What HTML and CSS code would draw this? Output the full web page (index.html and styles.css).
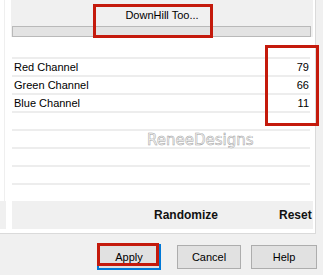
FILE: index.html
```html
<!DOCTYPE html>
<html>
<head>
    <meta charset="utf-8">
    <link rel="stylesheet" href="styles.css">
</head>
<body>
    <div class="dialog">
        <div class="panel">
            <div class="head">
                <div class="title">DownHill Too...</div>
                <div class="bar"></div>
            </div>
            <div class="list">
                <div class="row"><span>Red Channel</span><span>79</span></div>
                <div class="row"><span>Green Channel</span><span>66</span></div>
                <div class="row"><span>Blue Channel</span><span>11</span></div>
                <div class="row"></div>
                <div class="row"></div>
                <div class="row"></div>
                <div class="row"></div>
                <div class="row"></div>
            </div>
            <div class="actions">
                <div class="stub"></div>
                <div class="band">
                    <span class="randomize">Randomize</span>
                    <span class="reset">Reset</span>
                </div>
            </div>
        </div>
        <div class="buttons">
            <div class="btn btn-apply">Apply</div>
            <div class="btn btn-cancel">Cancel</div>
            <div class="btn btn-help">Help</div>
        </div>

        <!-- annotations drawn over the dialog -->
        <div class="mark mark-title"></div>
        <div class="mark mark-values"></div>
        <div class="mark mark-apply"></div>
        <div class="watermark">ReneeDesigns</div>
    </div>
</body>
</html>
```

FILE: styles.css
```css
html,
body {
    margin: 0;
    background: #f0f0f0;
    font-family: "Liberation Sans", Arial, sans-serif;
    font-size: 11px;
    color: #000;
}

.dialog {
    position: relative;
    width: 323px;
    height: 275px;
}

.panel {
    width: 315px;
    height: 233px;
    background: #fff linear-gradient(to right, transparent 4px, #efefef 4px, #efefef 5px, transparent 5px) no-repeat;
    background-size: 100% 229px;
    border-right: 1px solid #dadada;
    border-bottom: 1px solid #dadada;
    display: flex;
    flex-direction: column;
}

.head {
    margin-left: 11px;
    width: 302px;
    height: 37px;
    background: #f0f0f0;
    display: flex;
    flex-direction: column;
}

.title {
    height: 26px;
    line-height: 30px;
    text-align: center;
}

.bar {
    height: 11px;
    box-sizing: border-box;
    margin: 0 2px 0 1px;
    border: 1px solid #b9b9b9;
    background: #e3e3e3;
}

.list {
    margin: 20px 0 0 12px;
    width: 298px;
}

.row {
    height: 18px;
    box-sizing: border-box;
    border-top: 2px solid #ededed;
    padding: 0 1px 0 2px;
    line-height: 17px;
    display: flex;
    justify-content: space-between;
}

.actions {
    height: 28px;
    display: flex;
    gap: 6px;
}

.stub {
    width: 6px;
    background: #f0f0f0;
}

.band {
    width: 301px;
    background: #f0f0f0;
    display: flex;
    align-items: center;
    padding-left: 142px;
    box-sizing: border-box;
    font-size: 12px;
    font-weight: bold;
    color: #111;
    white-space: nowrap;
}

.reset {
    margin-left: 61px;
}

.buttons {
    display: flex;
    margin-top: 11px;
    padding-left: 97px;
}

.btn {
    height: 24px;
    box-sizing: border-box;
    border: 1px solid #adadad;
    background: #e1e1e1;
    text-align: center;
    line-height: 22px;
}

.btn-apply {
    width: 64px;
    margin-top: -1px;
    height: 26px;
    border: 2px solid #0078d7;
}

.btn-cancel {
    width: 64px;
    margin-left: 16px;
}

.btn-help {
    width: 66px;
    margin-left: 10px;
}

.mark {
    position: absolute;
    border: 3px solid #c41a0c;
    box-sizing: border-box;
}

.mark-title {
    left: 93px;
    top: 4px;
    width: 120px;
    height: 34px;
}

.mark-values {
    left: 265px;
    top: 45px;
    width: 54px;
    height: 81px;
}

.mark-apply {
    left: 97px;
    top: 243px;
    width: 62px;
    height: 23px;
}

.watermark {
    position: absolute;
    left: 147px;
    top: 131px;
    font-family: "DejaVu Sans", sans-serif;
    font-size: 15px;
    color: #fbfbfb;
    -webkit-text-stroke: 0.5px #a0a0a0;
}
```
